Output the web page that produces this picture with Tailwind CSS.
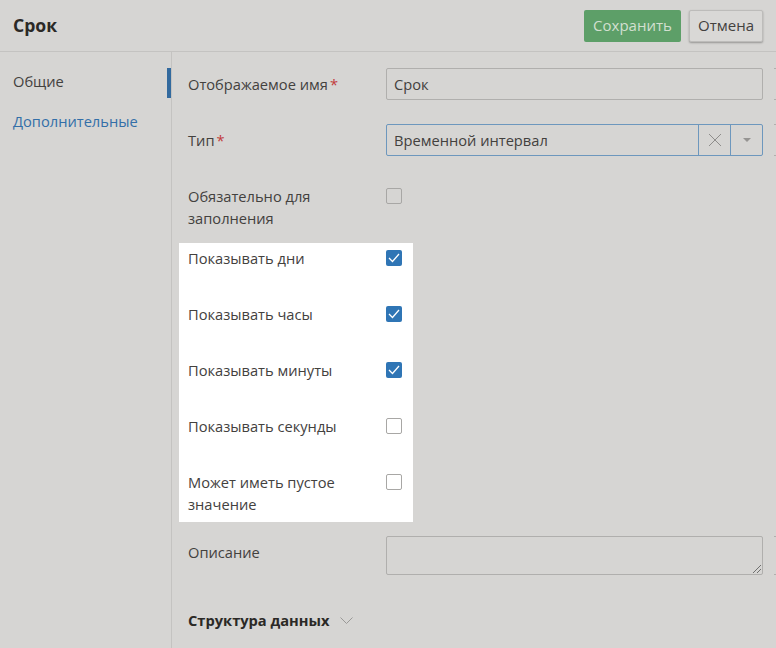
<!DOCTYPE html>
<html lang="ru">
  <head>
    <meta charset="UTF-8" />
    <title>Срок</title>
    <script src="https://cdn.jsdelivr.net/npm/@tailwindcss/browser@4"></script>
  </head>
  <body class="bg-[#d6d5d3] text-[#43413e] font-['Open_Sans',sans-serif] text-[14.67px] h-[648px] w-[776px] overflow-hidden">
    <!-- Header -->
    <header class="h-[52px] border-b border-[#c4c3c1] flex items-center justify-between pl-[13px] pr-[13px]">
      <h1 class="text-[17.6px] font-bold text-[#2b2926]">Срок</h1>
      <div class="flex gap-2">
        <button class="h-[32px] w-[97px] rounded-[2px] bg-[#5d9f68] text-[#d2dfd0] text-[15px]">Сохранить</button>
        <button class="h-[32px] w-[74px] rounded-[2px] border border-[#bdbcba] bg-[#d9d8d6] shadow-[0_1px_2px_rgba(0,0,0,0.3)] text-[15px]">Отмена</button>
      </div>
    </header>

    <div class="flex">
      <!-- Tabs -->
      <nav class="w-[172px] h-[596px] shrink-0 border-r border-[#c4c3c1] pt-[16px] relative">
        <div class="pl-[13px] h-[30px] leading-[26px]">Общие</div>
        <div class="pl-[13px] h-[30px] mt-[10px] leading-[26px] text-[#336fa8]">Дополнительные</div>
        <span class="absolute right-0 top-[16px] w-[4px] h-[30px] bg-[#336a9e]"></span>
      </nav>

      <!-- Form -->
      <main class="flex-1 min-w-0 pt-[16px] pl-[16px]">
        <div class="flex h-[56px]">
          <label class="w-[198px] shrink-0 leading-[32px]">Отображаемое имя<span class="text-[#c23b3b] ml-[2px]">*</span></label>
          <div class="w-[377px] shrink-0 h-[32px] border border-[#b0afad] rounded-[2px] px-[7px] leading-[30px]">Срок</div>
          <span class="ml-[11px] w-[3px] shrink-0 h-[32px] border-y border-[#b0afad]"></span>
        </div>
        <div class="flex h-[56px]">
          <label class="w-[198px] shrink-0 leading-[32px]">Тип<span class="text-[#c23b3b] ml-[2px]">*</span></label>
          <div class="w-[377px] shrink-0 h-[32px] border border-[#6d97bd] rounded-[2px] flex">
            <div class="flex-1 px-[7px] leading-[30px]">Временной интервал</div>
            <div class="w-[32px] border-l border-[#6d97bd] flex items-center justify-center">
              <svg width="14" height="14" viewBox="0 0 14 14" fill="none" stroke="#8e8d8b" stroke-width="1"><path d="M1 1l12 12M13 1L1 13" /></svg>
            </div>
            <div class="w-[32px] border-l border-[#6d97bd] flex items-center justify-center">
              <svg width="8" height="4" viewBox="0 0 8 4"><path d="M0 0h8L4 4z" fill="#959492" /></svg>
            </div>
          </div>
          <span class="ml-[11px] w-[3px] shrink-0 h-[32px] border-y border-[#b0afad]"></span>
        </div>
        <div class="flex h-[63px] pt-[5px]">
          <label class="w-[198px] shrink-0 leading-[22px]">Обязательно для<br />заполнения</label>
          <span class="w-[16px] h-[16px] mt-[3px] border border-[#a8a7a5] rounded-[2px]"></span>
        </div>

        <!-- Highlighted group -->
        <section class="bg-white w-[234px] h-[279px] -ml-[9px] pl-[9px] pt-[4px]">
          <div class="flex h-[56px]">
            <label class="w-[198px] shrink-0 leading-[22px]">Показывать дни</label>
            <span class="w-[16px] h-[16px] mt-[3px] rounded-[2px] bg-[#2f75b5] flex items-center justify-center">
              <svg width="12" height="10" viewBox="0 0 12 10" fill="none" stroke="#fff" stroke-width="1.3"><path d="M1 5l3.5 3.5L11 1" /></svg>
            </span>
          </div>
          <div class="flex h-[56px]">
            <label class="w-[198px] shrink-0 leading-[22px]">Показывать часы</label>
            <span class="w-[16px] h-[16px] mt-[3px] rounded-[2px] bg-[#2f75b5] flex items-center justify-center">
              <svg width="12" height="10" viewBox="0 0 12 10" fill="none" stroke="#fff" stroke-width="1.3"><path d="M1 5l3.5 3.5L11 1" /></svg>
            </span>
          </div>
          <div class="flex h-[56px]">
            <label class="w-[198px] shrink-0 leading-[22px]">Показывать минуты</label>
            <span class="w-[16px] h-[16px] mt-[3px] rounded-[2px] bg-[#2f75b5] flex items-center justify-center">
              <svg width="12" height="10" viewBox="0 0 12 10" fill="none" stroke="#fff" stroke-width="1.3"><path d="M1 5l3.5 3.5L11 1" /></svg>
            </span>
          </div>
          <div class="flex h-[56px]">
            <label class="w-[198px] shrink-0 leading-[22px]">Показывать секунды</label>
            <span class="w-[16px] h-[16px] mt-[3px] border border-[#a8a7a5] rounded-[2px]"></span>
          </div>
          <div class="flex">
            <label class="w-[198px] shrink-0 leading-[22px]">Может иметь пустое<br />значение</label>
            <span class="w-[16px] h-[16px] mt-[3px] border border-[#a8a7a5] rounded-[2px]"></span>
          </div>
        </section>

        <div class="flex mt-[14px] h-[40px]">
          <label class="w-[198px] shrink-0 leading-[32px]">Описание</label>
          <div class="w-[377px] shrink-0 h-[39px] border border-[#b0afad] rounded-[2px] relative">
            <svg class="absolute right-0 bottom-0" width="10" height="10" viewBox="0 0 10 10" stroke="#555" stroke-width="0.8"><path d="M1 9l8-8M5 9l4-4" /></svg>
          </div>
          <span class="ml-[11px] w-[3px] shrink-0 h-[39px] border-y border-[#b0afad]"></span>
        </div>

        <div class="flex items-center mt-[24px] h-[40px]">
          <span class="font-bold text-[#2b2926]">Структура данных</span>
          <svg class="ml-[11px]" width="13" height="7" viewBox="0 0 13 7" fill="none" stroke="#9a9997"><path d="M.5.5l6 6 6-6" /></svg>
        </div>
      </main>
    </div>
  </body>
</html>
